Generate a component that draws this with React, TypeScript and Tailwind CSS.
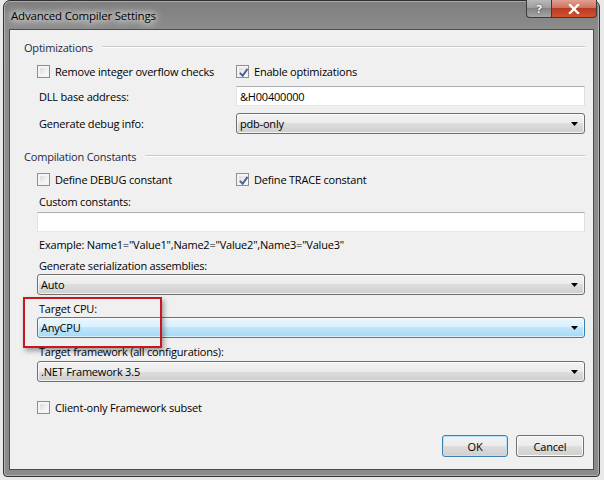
import React from 'react';

const Check: React.FC<{ checked?: boolean }> = ({ checked }) => (
  <div className="w-[13px] h-[13px] border border-[#8e8f8f] bg-[#f4f4f4] p-[2px] shrink-0">
    <div className="w-full h-full bg-[linear-gradient(135deg,#dcdcdc,#fbfbfb)] relative">
      {checked && (
        <svg viewBox="0 0 9 9" className="absolute -left-[1px] -top-[1px] w-[11px] h-[11px]">
          <path d="M1.5 4.8 L3.8 7.2 L7.8 1.5" fill="none" stroke="#4a5f97" strokeWidth="1.6" />
        </svg>
      )}
    </div>
  </div>
);

const CheckRow: React.FC<{ checked?: boolean; label: string }> = ({ checked, label }) => (
  <div className="flex items-center gap-[5px]">
    <Check checked={checked} />
    <span>{label}</span>
  </div>
);

const Arrow = () => (
  <svg viewBox="0 0 7 4" className="w-[7px] h-[4px]">
    <path d="M0 0 H7 L3.5 4 Z" fill="#000" />
  </svg>
);

const Combo: React.FC<{ value: string; active?: boolean }> = ({ value, active }) => (
  <div
    className={
      active
        ? 'h-[21px] rounded-[3px] border border-[#3c7fb1] bg-[linear-gradient(to_bottom,#eaf6fd_0%,#d9f0fc_50%,#bee6fd_50%,#a7d9f5_100%)] shadow-[inset_0_0_0_1px_rgba(255,255,255,0.6)] flex items-center justify-between pl-[3px] pr-[6px]'
        : 'h-[21px] rounded-[3px] border border-[#707070] bg-[linear-gradient(to_bottom,#f2f2f2_0%,#ebebeb_50%,#dddddd_50%,#cfcfcf_100%)] shadow-[inset_0_0_0_1px_rgba(255,255,255,0.7)] flex items-center justify-between pl-[3px] pr-[6px]'
    }
  >
    <span>{value}</span>
    <Arrow />
  </div>
);

const TextBox: React.FC<{ value?: string }> = ({ value }) => (
  <div className="h-[20px] border border-[#abadb3] border-l-[#e2e3ea] border-r-[#dbdfe6] border-b-[#e3e9ef] bg-white flex items-center pl-[3px]">
    {value}
  </div>
);

const GroupHeader: React.FC<{ title: string }> = ({ title }) => (
  <div className="h-[18px] flex items-center gap-[9px] pl-[14px] text-[#1e2a44]">
    <span>{title}</span>
    <div className="flex-1 h-[2px] border-t border-[#c9c9c9] border-b-white border-b" />
  </div>
);

const Btn: React.FC<{ label: string; primary?: boolean }> = ({ label, primary }) => (
  <div
    className={
      primary
        ? 'w-[66px] h-[22px] rounded-[3px] border border-[#3c7fb1] bg-[linear-gradient(to_bottom,#f2f2f2_0%,#ebebeb_50%,#dddddd_50%,#cfcfcf_100%)] shadow-[inset_0_0_0_1px_#b8e2f9] flex items-center justify-center'
        : 'w-[68px] h-[22px] rounded-[3px] border border-[#707070] bg-[linear-gradient(to_bottom,#f2f2f2_0%,#ebebeb_50%,#dddddd_50%,#cfcfcf_100%)] shadow-[inset_0_0_0_1px_#fcfcfc] flex items-center justify-center'
    }
  >
    {label}
  </div>
);

export default function App() {
  return (
    <div className="w-[604px] h-[480px] bg-[#e9e9e9] overflow-hidden font-['Segoe_UI','Open_Sans',sans-serif] text-[11px] tracking-[-0.2px] text-black leading-none">
      {/* window frame */}
      <div className="ml-[3px] w-[597px] h-[477px] rounded-t-[7px] rounded-b-[4px] border border-[#2f2f2f] bg-[linear-gradient(to_bottom,#7e7e7e,#8d8d8d_30px,#8a8a8a)] shadow-[inset_0_0_0_1px_rgba(255,255,255,0.35)] flex flex-col px-[5px] pb-[6px]">
        {/* title bar */}
        <div className="h-[28px] flex items-start justify-between relative">
          <div className="pt-[9px] pl-[2px] text-[11.5px] text-black [text-shadow:0_0_6px_#fff,0_0_10px_#fff,0_0_14px_rgba(255,255,255,0.8)]">
            Advanced Compiler Settings
          </div>
          <div className="flex -mt-px mr-[-3px]">
            <div className="w-[26px] h-[18px] rounded-bl-[4px] border border-[#3a3a3a] border-t-0 bg-[linear-gradient(to_bottom,#b9b9b9,#9c9c9c_50%,#858585_50%,#a5a5a5)] flex items-center justify-center text-white font-bold text-[11px] [text-shadow:0_0_2px_#333]">
              ?
            </div>
            <div className="w-[45px] h-[18px] rounded-br-[4px] border border-[#3a3a3a] border-t-0 border-l-0 bg-[linear-gradient(to_bottom,#e1a193,#cf6d5a_50%,#b83a22_50%,#d2532e)] flex items-center justify-center">
              <svg viewBox="0 0 12 10" className="w-[12px] h-[10px]">
                <path d="M2 1 L10 9 M10 1 L2 9" stroke="#fff" strokeWidth="2.4" strokeLinecap="square" />
              </svg>
            </div>
          </div>
        </div>

        {/* client area */}
        <div className="flex-1 border border-[#4d4d4d] bg-[#f0f0f0] relative flex flex-col pt-[8px] pr-[8px]">
          <GroupHeader title="Optimizations" />

          <div className="mt-[6px] h-[18px] grid grid-cols-[199px_1fr] items-center pl-[27px]">
            <CheckRow label="Remove integer overflow checks" />
            <CheckRow checked label="Enable optimizations" />
          </div>

          <div className="mt-[6px] grid grid-cols-[199px_1fr] items-center pl-[27px]">
            <span className="pl-[2px]">DLL base address:</span>
            <TextBox value="&H00400000" />
          </div>

          <div className="mt-[7px] grid grid-cols-[199px_1fr] items-center pl-[27px]">
            <span className="pl-[2px]">Generate debug info:</span>
            <Combo value="pdb-only" />
          </div>

          <div className="mt-[13px]">
            <GroupHeader title="Compilation Constants" />
          </div>

          <div className="mt-[5px] h-[18px] grid grid-cols-[199px_1fr] items-center pl-[27px]">
            <CheckRow label="Define DEBUG constant" />
            <CheckRow checked label="Define TRACE constant" />
          </div>

          <div className="pl-[27px] flex flex-col">
            <div className="mt-[5px] h-[16px] flex items-center pl-[2px]">Custom constants:</div>
            <div className="mt-[3px]">
              <TextBox />
            </div>
            <div className="mt-[4px] h-[16px] flex items-center pl-[2px]">
              Example: Name1="Value1",Name2="Value2",Name3="Value3"
            </div>
            <div className="mt-[5px] h-[16px] flex items-center pl-[2px]">Generate serialization assemblies:</div>
            <div className="mt-[1px]">
              <Combo value="Auto" />
            </div>
            <div className="mt-[5px] h-[16px] flex items-center pl-[2px]">Target CPU:</div>
            <div className="mt-[1px]">
              <Combo value="AnyCPU" active />
            </div>
            <div className="mt-[5px] h-[16px] flex items-center pl-[2px]">Target framework (all configurations):</div>
            <div className="mt-[2px]">
              <Combo value=".NET Framework 3.5" />
            </div>
            <div className="mt-[16px] h-[18px] flex items-center">
              <CheckRow label="Client-only Framework subset" />
            </div>
          </div>

          <div className="mt-[19px] flex justify-end gap-[8px] pr-px">
            <Btn label="OK" primary />
            <Btn label="Cancel" />
          </div>

          {/* red highlight around Target CPU */}
          <div className="absolute left-[13px] top-[267px] w-[139px] h-[51px] border-2 border-[#c8171e] shadow-[2px_3px_5px_rgba(0,0,0,0.35)]" />
        </div>
      </div>
    </div>
  );
}
